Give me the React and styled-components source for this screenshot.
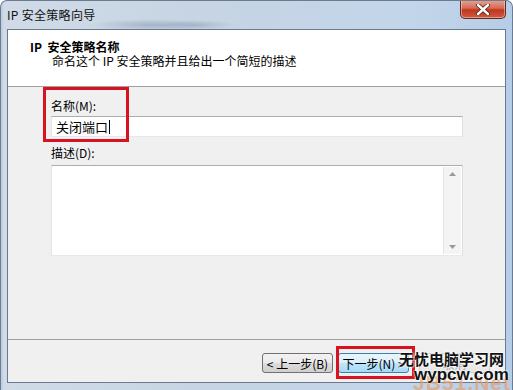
import React from "react";
import styled, { createGlobalStyle } from "styled-components";

const GlobalStyle = createGlobalStyle`
  html, body {
    margin: 0;
    padding: 0;
    background: #ffffff;
  }
  body {
    font-family: "Noto Sans CJK SC", "Liberation Sans", sans-serif;
    font-size: 12px;
    color: #000;
  }
`;

const Window = styled.div`
  position: relative;
  width: 513px;
  height: 390px;
  box-sizing: border-box;
  display: flex;
  flex-direction: column;
  border: 1px solid #6b7c90;
  border-bottom: none;
  border-radius: 7px 7px 0 0;
  overflow: hidden;
  background:
    radial-gradient(ellipse 60px 6px at 150px 24px, rgba(120, 140, 165, 0.45), transparent),
    radial-gradient(ellipse 40px 5px at 195px 24px, rgba(120, 140, 165, 0.35), transparent),
    linear-gradient(to right, #b9cbe0 0px, #d0dbe7 3px, #c6d4e3 40%, #c3d5ea 80%, #b6cde7 100%);
`;

const TitleBar = styled.div`
  height: 28px;
  display: flex;
  align-items: flex-start;
  flex-shrink: 0;
`;

const Caption = styled.div`
  padding: 6px 0 0 6px;
  font-size: 12px;
  line-height: 16px;
  color: #111;
  letter-spacing: 0.3px;
`;

const CloseButton = styled.div`
  margin: -1px 6px 0 auto;
  width: 46px;
  height: 19px;
  box-sizing: border-box;
  border: 1px solid #5d2a24;
  border-top: none;
  border-radius: 0 0 5px 5px;
  background: linear-gradient(to bottom, #e8a493 0%, #d56c55 45%, #c1351f 55%, #cf5a3d 100%);
  box-shadow: inset 0 0 0 1px rgba(255, 220, 210, 0.5);
  display: flex;
  align-items: center;
  justify-content: center;
`;

const Client = styled.div`
  flex: 1;
  margin: 0 6px 7px 6px;
  border: 1px solid #6a7a8d;
  display: flex;
  flex-direction: column;
  background: #f0f0f0;
`;

const Header = styled.div`
  height: 57px;
  box-sizing: border-box;
  background: #ffffff;
  border-bottom: 1px solid #a0a0a0;
  padding: 10px 0 0 22px;
  line-height: 14px;
`;

const HeaderTitle = styled.div`
  font-weight: bold;
  font-size: 12px;
  font-family: "Noto Sans CJK SC", "Liberation Serif", serif;
`;

const HeaderSub = styled.div`
  margin-left: 22px;
  font-size: 12px;
`;

const Body = styled.div`
  flex: 1;
  padding: 12px 0 0 43px;
  display: flex;
  flex-direction: column;
`;

const Field = styled.div`
  position: relative;
  display: flex;
  flex-direction: column;
  gap: ${(p) => p.$gap || 3}px;
  margin-bottom: ${(p) => p.$after || 0}px;
`;

const Label = styled.label`
  line-height: 14px;
  font-size: 12px;
`;

const TextBox = styled.div`
  width: 412px;
  height: 21px;
  box-sizing: border-box;
  border: 1px solid #abadb3;
  border-left-color: #e2e3ea;
  border-right-color: #dbdfe6;
  border-bottom-color: #e3e9ef;
  background: #fff;
  display: flex;
  align-items: center;
  padding-left: 4px;
  font-size: 13px;
`;

const Caret = styled.span`
  display: inline-block;
  width: 1px;
  height: 14px;
  background: #000;
  margin-left: 1px;
`;

const TextArea = styled.div`
  width: 412px;
  height: 91px;
  box-sizing: border-box;
  border: 1px solid #abadb3;
  border-left-color: #e2e3ea;
  border-right-color: #dbdfe6;
  border-bottom-color: #e3e9ef;
  background: #fff;
  display: flex;
  justify-content: flex-end;
  padding: 1px;
`;

const ScrollBar = styled.div`
  width: 17px;
  background: #f4f4f4;
  border-left: 1px solid #e6e6e6;
  display: flex;
  flex-direction: column;
  justify-content: space-between;
  align-items: center;
  padding: 5px 0;
`;

const Highlight = styled.div`
  position: absolute;
  left: -8px;
  top: -12px;
  width: 86px;
  height: 55px;
  box-sizing: border-box;
  border: 3px solid #d8121e;
  pointer-events: none;
`;

const NextHighlight = styled.div`
  position: absolute;
  left: -3px;
  top: -8px;
  width: 79px;
  height: 33px;
  box-sizing: border-box;
  border: 3px solid #d8121e;
  pointer-events: none;
`;

const Footer = styled.div`
  height: 43px;
  box-sizing: border-box;
  border-top: 1px solid #a0a0a0;
  display: flex;
  justify-content: flex-end;
  align-items: flex-start;
  gap: 5px;
  padding: 13px 15px 0 0;
`;

const Button = styled.div`
  position: relative;
  width: 71px;
  height: 20px;
  box-sizing: border-box;
  border: 1px solid ${(p) => (p.$primary ? "#3c7fb1" : "#707070")};
  border-radius: 3px;
  background: ${(p) =>
    p.$primary
      ? "linear-gradient(to bottom, #eaf6fd 0%, #d9f0fc 50%, #bee6fd 51%, #a7d9f5 100%)"
      : "linear-gradient(to bottom, #f2f2f2 0%, #ebebeb 50%, #dddddd 51%, #cfcfcf 100%)"};
  display: flex;
  align-items: center;
  justify-content: center;
  font-size: 12px;
  white-space: nowrap;
  margin-left: ${(p) => (p.$spaced ? 5 : 0)}px;
  opacity: ${(p) => (p.$faded ? 0.3 : 1)};
`;

const Watermark = styled.div`
  position: absolute;
  right: 5px;
  bottom: 0;
  width: 108px;
  height: 40px;
  pointer-events: none;
`;

const WmLogo = styled.div`
  position: absolute;
  right: -4px;
  bottom: -5px;
  font-family: "Liberation Sans", sans-serif;
  font-size: 21px;
  font-weight: bold;
  white-space: nowrap;
  color: rgba(232, 160, 105, 0.7);
  letter-spacing: 1px;
`;

const WmTitle = styled.div`
  position: absolute;
  left: 0;
  top: -1px;
  font-size: 15px;
  font-weight: bold;
  line-height: 20px;
  white-space: nowrap;
  color: #111;
  text-shadow: 0 0 2px #fff, 0 0 2px #fff, 0 0 3px #fff;
`;

const WmSite = styled.div`
  position: absolute;
  left: 15px;
  top: 15px;
  font-family: "Liberation Sans", sans-serif;
  font-size: 17px;
  font-weight: bold;
  line-height: 20px;
  white-space: nowrap;
  color: #111;
  text-shadow: 0 0 2px #fff, 0 0 2px #fff;
`;

const Arrow = ({ up }) => (
  <svg width="7" height="4" viewBox="0 0 7 4">
    <path d={up ? "M0 4 L3.5 0 L7 4 Z" : "M0 0 L3.5 4 L7 0 Z"} fill="#9a9a9a" />
  </svg>
);

export default function App() {
  return (
    <>
      <GlobalStyle />
      <Window>
        <TitleBar>
          <Caption>IP 安全策略向导</Caption>
          <CloseButton>
            <svg width="14" height="11" viewBox="0 0 14 11">
              <path
                d="M2 1 L12 10 M12 1 L2 10"
                stroke="#4a1d16"
                strokeWidth="4"
                strokeLinecap="round"
              />
              <path
                d="M2 1 L12 10 M12 1 L2 10"
                stroke="#ffffff"
                strokeWidth="2.4"
                strokeLinecap="round"
              />
            </svg>
          </CloseButton>
        </TitleBar>
        <Client>
          <Header>
            <HeaderTitle>IP&nbsp; 安全策略名称</HeaderTitle>
            <HeaderSub>命名这个 IP 安全策略并且给出一个简短的描述</HeaderSub>
          </Header>
          <Body>
            <Field $gap={3} $after={9}>
              <Label>名称(M):</Label>
              <TextBox>
                关闭端口
                <Caret />
              </TextBox>
              <Highlight />
            </Field>
            <Field $gap={5}>
              <Label>描述(D):</Label>
              <TextArea>
                <ScrollBar>
                  <Arrow up />
                  <Arrow />
                </ScrollBar>
              </TextArea>
            </Field>
          </Body>
          <Footer>
            <Button>&lt; 上一步(B)</Button>
            <Button $primary>
              下一步(N) &gt;
              <NextHighlight />
            </Button>
            <Button $faded $spaced>取消</Button>
          </Footer>
        </Client>
        <Watermark>
          <WmLogo>JB51.Net</WmLogo>
          <WmTitle>无忧电脑学习网</WmTitle>
          <WmSite>wypcw.com</WmSite>
        </Watermark>
      </Window>
    </>
  );
}
